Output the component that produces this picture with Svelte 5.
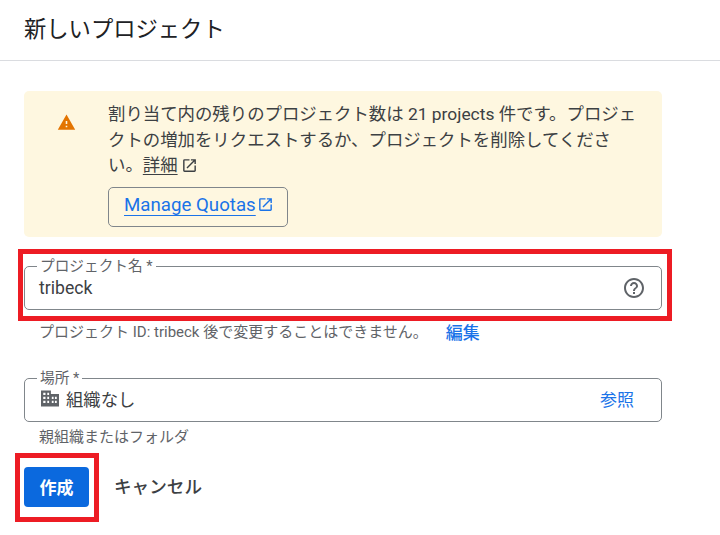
<script lang="ts">
    const warningPath = 'M1 21h22L12 2 1 21zm12-3h-2v-2h2v2zm0-4h-2v-4h2v4z';
    const externalPath = 'M19 19H5V5h7V3H5a2 2 0 0 0-2 2v14a2 2 0 0 0 2 2h14c1.1 0 2-.9 2-2v-7h-2v7zM14 3v2h3.59l-9.83 9.83 1.41 1.41L19 6.41V10h2V3h-7z';
    const helpPath = 'M11 18h2v-2h-2v2zm1-16C6.48 2 2 6.48 2 12s4.48 10 10 10 10-4.48 10-10S17.52 2 12 2zm0 18c-4.41 0-8-3.59-8-8s3.59-8 8-8 8 3.59 8 8-3.59 8-8 8zm0-14c-2.21 0-4 1.79-4 4h2c0-1.1.9-2 2-2s2 .9 2 2c0 2-3 1.75-3 5h2c0-2.25 3-2.5 3-5 0-2.21-1.79-4-4-4z';
    // two-block office building, windows cut out of a solid shape
    const buildingPath = 'M2 3h11v4h9v14H2V3zm2.500 2.500V8H7V5.500H4.500zm4.500 0V8h2V5.500H9zM4.500 10v2.500H7V10H4.500zm4.500 0v2.500h2V10H9zm5 0v2.500h2V10h-2zm3.500 0v2.500h2V10h-2zM4.500 14.500V17H7v-2.500H4.500zm4.500 0V17h2v-2.500H9zm5 0V17h2v-2.500h-2zm3.500 0V17h2v-2.500h-2z';
</script>

<div class="page">
    <header>
        <h1>新しいプロジェクト</h1>
    </header>

    <main>
        <div class="banner">
            <svg class="warning" viewBox="0 0 24 24"><path d={warningPath} /></svg>
            <div class="banner-body">
                <p>
                    割り当て内の残りのプロジェクト数は 21 projects 件です。プロジェクトの増加をリクエストするか、プロジェクトを削除してください。<a class="more" href="#more">詳細</a><svg class="external" viewBox="0 0 24 24"><path d={externalPath} /></svg>
                </p>
                <button class="quota">
                    <span>Manage Quotas</span>
                    <svg class="external blue" viewBox="0 0 24 24"><path d={externalPath} /></svg>
                </button>
            </div>
        </div>

        <div class="field-wrap first">
            <fieldset>
                <legend>プロジェクト名 *</legend>
                <div class="value">
                    <span class="name">tribeck</span>
                    <svg class="help" viewBox="0 0 24 24"><path d={helpPath} /></svg>
                </div>
            </fieldset>
            <div class="note-row">
                <span class="note">プロジェクト ID: tribeck 後で変更することはできません。</span>
                <a class="edit" href="#edit">編集</a>
            </div>
            <div class="mark mark-name"></div>
        </div>

        <div class="field-wrap second">
            <fieldset>
                <legend>場所 *</legend>
                <div class="value">
                    <svg class="domain" viewBox="2 3 20 18"><path d={buildingPath} /></svg>
                    <span class="org">組織なし</span>
                    <a class="browse" href="#browse">参照</a>
                </div>
            </fieldset>
            <div class="note">親組織またはフォルダ</div>
        </div>

        <div class="actions">
            <button class="create">作成</button>
            <button class="cancel">キャンセル</button>
            <div class="mark mark-create"></div>
        </div>
    </main>
</div>

<style>
    :global(body) {
        margin: 0;
        background: #fff;
    }

    .page {
        width: 720px;
        height: 535px;
        overflow: hidden;
        font-family: Roboto, "Noto Sans CJK JP", sans-serif;
        color: #3c4043;
    }

    header {
        height: 61px;
        box-sizing: border-box;
        padding: 12px 24px 0;
        border-bottom: 1px solid #dadce0;
    }

    h1 {
        margin: 0;
        font-size: 22.3px;
        line-height: 34px;
        font-weight: 400;
        color: #202124;
    }

    main {
        width: 638px;
        padding: 30px 0 0 24px;
    }

    .banner {
        display: flex;
        height: 146px;
        box-sizing: border-box;
        padding: 11px 22px 0 33px;
        background: #fef7e0;
        border-radius: 5px;
    }

    .warning {
        width: 19px;
        height: 19px;
        margin-top: 11px;
        margin-right: 32px;
        flex-shrink: 0;
        fill: #e37400;
    }

    .banner-body {
        flex: 1;
    }

    p {
        margin: 0;
        font-size: 17.4px;
        line-height: 25.6px;
        color: #3c4043;
    }

    .more {
        color: #3c4043;
        text-decoration: underline;
        text-underline-offset: 3px;
    }

    .external {
        width: 17px;
        height: 17px;
        margin-left: 3px;
        vertical-align: -3px;
        fill: #3c4043;
    }

    .external.blue {
        fill: #1a73e8;
        margin-left: 1px;
        margin-bottom: 1px;
        flex-shrink: 0;
    }

    .quota {
        display: flex;
        align-items: center;
        width: 180px;
        height: 40px;
        margin-top: 8px;
        padding: 0 0 3px 15px;
        background: transparent;
        border: 1px solid #80868b;
        border-radius: 5px;
        font: inherit;
        font-size: 18.7px;
        font-weight: 400;
        color: #1a73e8;
    }

    .quota span {
        text-decoration: underline;
        text-underline-offset: 4px;
    }

    .field-wrap {
        position: relative;
    }

    .first {
        margin-top: 19px;
    }

    .second {
        margin-top: 24px;
    }

    fieldset {
        margin: 0;
        padding: 0 15px 0 14px;
        height: 54px;
        box-sizing: border-box;
        border: 1px solid #80868b;
        border-radius: 5px;
    }

    legend {
        padding: 0 3px;
        margin-left: -2px;
        font-size: 14.67px;
        line-height: 20px;
        color: #5f6368;
    }

    .value {
        display: flex;
        align-items: center;
        height: 30px;
        margin-top: -3px;
    }

    .second .value {
        margin-top: -5px;
    }

    .name {
        flex: 1;
        font-size: 17.6px;
        color: #3c4043;
    }

    .help {
        width: 24px;
        height: 24px;
        fill: #5f6368;
    }

    .domain {
        width: 18px;
        height: 17px;
        margin-left: 2px;
        margin-right: 7px;
        fill: #5f6368;
    }

    .org {
        flex: 1;
        font-size: 17.33px;
    }

    .browse {
        font-size: 17px;
        color: #1a73e8;
        text-decoration: none;
        margin-right: 12px;
    }

    .note-row {
        display: flex;
        align-items: center;
        gap: 18px;
        margin-top: 9px;
        padding-left: 15px;
    }

    .note {
        font-size: 15px;
        line-height: 20px;
        color: #5f6368;
    }

    .second .note {
        margin-top: 5px;
        padding-left: 15px;
    }

    .edit {
        font-size: 17px;
        font-weight: 500;
        color: #1a73e8;
        text-decoration: none;
    }

    .actions {
        position: relative;
        display: flex;
        align-items: center;
        gap: 25px;
        margin-top: 20px;
    }

    .create {
        width: 65px;
        height: 40px;
        padding: 0 0 2px;
        background: #0b69de;
        color: #fff;
        border: none;
        border-radius: 4px;
        font: inherit;
        font-size: 17px;
        font-weight: 700;
    }

    .cancel {
        padding: 0 0 4px;
        background: none;
        border: none;
        font: inherit;
        font-size: 17.6px;
        font-weight: 500;
        color: #3c4043;
    }

    .mark {
        position: absolute;
        box-sizing: border-box;
        border: 5px solid #ed1c24;
        pointer-events: none;
    }

    .mark-name {
        left: -6px;
        top: -7px;
        width: 654px;
        height: 72px;
    }

    .mark-create {
        left: -9px;
        top: -14px;
        width: 84px;
        height: 69px;
    }
</style>
